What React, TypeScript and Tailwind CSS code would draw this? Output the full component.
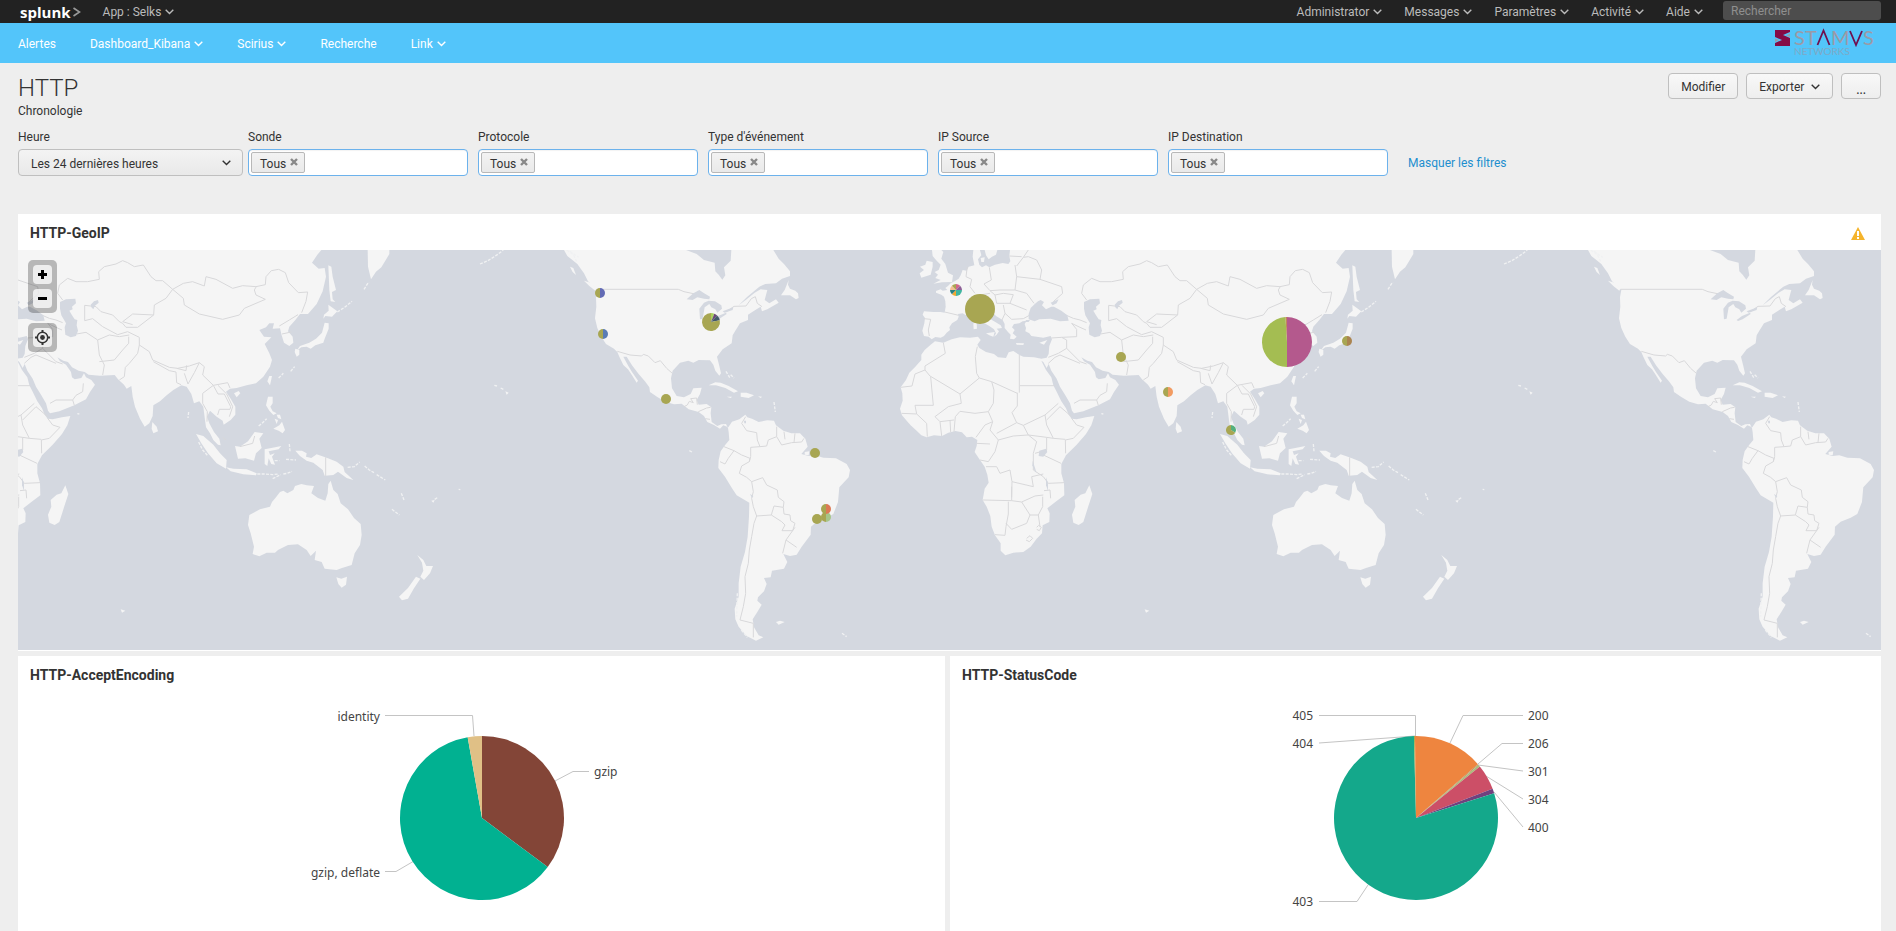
import type { ReactNode } from "react";

const FILTERS = ["Sonde", "Protocole", "Type d'événement", "IP Source", "IP Destination"];

const USER_MENU = ["Administrator", "Messages", "Paramètres", "Activité", "Aide"];

const APP_NAV = [
  { label: "Alertes", menu: false },
  { label: "Dashboard_Kibana", menu: true },
  { label: "Scirius", menu: true },
  { label: "Recherche", menu: false },
  { label: "Link", menu: true },
];

/** Contours of the old world, in thirds of a map pixel. */
const OLD_WORLD = [
  // Europe, Africa and Asia in one ring
  "390,30 388,48 391,64 385,72 368,69 345,74 328,82 318,76 306,82 298,74 294,58 304,46 300,30 280,30 278,50 283,76 266,80 260,92 248,90 242,106 236,116 224,124 212,130 204,138 196,144 202,150 188,152 182,148 168,153 168,158 184,164 192,170 196,184 197,200 194,218 182,216 160,216 132,214 128,224 135,234 133,250 127,272 132,288 146,290 155,298 166,291 182,293 192,288 200,278 210,270 208,262 216,250 232,240 236,230 234,222 248,220 258,226 270,220 278,216 290,226 300,240 314,250 328,258 342,268 348,280 342,290 350,284 357,274 350,266 366,264 362,256 346,246 332,238 324,220 318,206 324,200 334,212 348,228 368,240 374,252 374,264 384,276 392,284 390,296 402,298 410,290 398,280 404,270 396,262 402,252 418,250 428,244 440,242 434,252 438,264 436,274 448,280 454,288 470,290 490,293 512,288 516,298 508,318 506,342 500,353 484,356 462,352 430,350 418,345 400,333 386,337 378,354 354,352 342,342 318,336 298,324 292,314 302,300 294,290 270,293 240,292 215,298 190,308 165,304 152,314 134,330 124,344 124,360 106,380 88,398 78,420 62,442 67,460 68,482 60,506 66,526 80,542 92,556 110,572 124,586 140,592 162,586 186,588 205,578 226,573 246,577 260,592 276,590 292,600 290,618 284,636 300,660 314,680 322,704 326,728 314,746 308,780 320,800 331,828 335,860 345,886 362,910 362,932 376,946 400,938 430,936 452,920 470,896 486,880 488,856 508,846 509,820 502,805 526,786 553,766 552,730 544,700 544,672 558,646 590,614 618,582 634,556 643,528 618,532 590,538 575,536 566,524 558,505 544,484 530,455 520,436 514,412 498,390 484,362 490,366 500,384 506,372 514,392 530,416 540,440 556,466 570,490 576,512 582,520 610,514 655,496 690,478 702,456 717,434 706,420 690,412 684,400 676,414 656,418 648,412 645,396 630,374 612,364 604,352 622,362 636,366 648,382 668,392 686,396 698,404 732,407 776,405 786,418 804,434 812,446 826,438 830,470 837,500 852,536 866,560 880,550 890,528 892,496 912,484 932,466 952,450 976,436 992,440 1006,462 1014,490 1030,484 1042,500 1047,540 1050,562 1062,580 1072,600 1086,614 1094,616 1090,596 1074,576 1060,550 1053,530 1062,512 1082,530 1100,542 1103,554 1124,540 1138,524 1138,500 1124,476 1110,455 1122,446 1142,444 1172,436 1200,430 1222,410 1242,380 1248,360 1240,340 1226,312 1246,292 1224,290 1210,270 1230,262 1240,250 1254,250 1250,266 1272,265 1277,286 1284,308 1300,318 1312,308 1310,290 1296,274 1300,260 1318,240 1332,222 1356,222 1382,192 1400,154 1410,110 1406,84 1388,86 1368,68 1384,44 1396,30",
  // British Isles, Baltic islands
  "156,30 158,48 170,62 182,74 176,90 164,96 174,104 166,114 182,120 160,131 186,127 216,126 219,106 204,98 196,72 184,56 190,36 184,30",
  "140,62 158,66 158,80 152,104 124,113 119,100 132,90 120,80 136,74",
  "314,30 318,46 326,58 336,50 348,44 352,30",
  "302,54 314,52 312,66 304,66",
  // Mediterranean islands
  "280,250 290,248 291,266 281,268",
  "318,280 344,276 340,290 328,286",
  "408,309 432,310 430,315 410,314",
  "478,308 502,300 492,314",
  // Kamchatka, Sakhalin
  "1535,30 1536,80 1545,118 1560,95 1576,82 1588,62 1600,42 1600,30",
  "1417,76 1426,80 1430,110 1440,150 1428,156 1430,178 1438,186 1424,184 1420,150",
  // Japan, Taiwan
  "1417,194 1444,214 1428,230 1408,228 1402,236 1404,224 1418,212",
  "1406,248 1418,250 1418,266 1406,296 1402,308 1378,316 1364,326 1352,320 1336,322 1322,332 1332,318 1360,308 1380,296 1398,278",
  "1318,326 1330,330 1330,344 1322,350 1316,336",
  "1240,408 1248,408 1242,436 1234,424",
  // Sri Lanka, Madagascar, Hainan
  "889,546 902,560 906,574 892,580 887,566",
  "628,736 637,762 624,802 610,846 596,855 580,848 576,824 586,800 584,780 602,764 616,760",
  "1134,460 1148,453 1153,460 1142,472",
  // Philippines
  "1236,470 1250,470 1250,490 1243,500 1250,514 1262,520 1252,525 1240,512 1230,496",
  "1252,566 1270,556 1278,545 1287,570 1280,580 1268,572",
  "1262,524 1272,524 1276,538 1266,534",
  "1256,536 1266,540 1262,552",
  // Indonesia, New Guinea
  "1020,582 1042,588 1072,614 1092,640 1112,660 1110,686 1082,670 1056,640 1036,610",
  "1110,682 1132,686 1172,688 1202,700 1200,706 1162,703 1124,694",
  "1137,618 1152,620 1176,604 1196,576 1222,580 1210,596 1217,624 1200,640 1194,662 1168,655 1146,656",
  "1226,628 1246,624 1276,618 1268,628 1238,634 1242,645 1256,640 1248,650 1257,674 1246,672 1238,655 1234,678 1226,672 1226,650",
  "1318,632 1338,632 1352,640 1350,650 1366,654 1382,643 1416,655 1442,665 1462,680 1466,696 1492,720 1472,714 1446,695 1432,705 1406,707 1400,690 1372,668 1352,662 1332,648",
  // Australia, Tasmania
  "1180,825 1212,808 1242,800 1248,786 1260,772 1272,756 1282,752 1294,760 1312,750 1317,738 1336,732 1352,736 1374,738 1366,760 1386,774 1408,782 1415,760 1417,732 1424,722 1432,750 1445,762 1454,790 1476,808 1494,834 1514,852 1517,885 1512,915 1496,940 1487,975 1458,984 1442,990 1406,986 1397,966 1376,960 1380,932 1364,948 1352,930 1326,913 1296,915 1266,930 1257,938 1232,938 1210,949 1190,942 1194,920 1184,880 1176,855",
  "1441,1012 1456,1016 1473,1010 1470,1034 1457,1043 1447,1032",
  // New Zealand
  "1684,945 1702,960 1711,978 1731,978 1722,1000 1704,1020 1693,1010 1702,992 1698,968",
  "1680,1010 1693,1016 1674,1045 1656,1076 1638,1081 1629,1070 1656,1044",
  "794,1108 808,1112 798,1118",
  "1726,782 1736,780 1732,788",
];

/** Thin island chains that are drawn as strokes. */
const OLD_ISLANDS =
  "M1208,558l10,-8 14,-14M1204,702l24,0 22,2 18,-2M1250,716l24,-12M1282,702l12,-2 14,-6M1300,612l2,22M1290,658l30,2M1256,662l14,0M1475,682l20,-2 16,-14M1526,678l14,12 14,8M1562,704l26,16M1608,808l22,17M1636,760l8,20M1444,216l22,-14 22,-18M1524,148l14,-22M1268,414l14,-14M1304,394l12,-14M1028,606l12,24 14,16M998,516l-2,18M664,521l6,1M1736,778l8,-5M1808,748l5,1";

const OLD_BORDERS =
  "M620,180L605,160 610,135 635,115 660,125 695,125 730,118 728,95 745,80 780,72 800,62 815,68 835,80 862,75 885,110 900,122 920,122 950,148 982,130 1010,125 1045,138 1050,110 1080,118 1130,145 1160,137 1200,140 1228,134 1230,110 1246,92 1268,88 1288,98 1298,128 1327,158 1355,156 1350,184 1337,218" +
  "M950,148L982,175 985,195 1030,222 1100,238 1150,225 1165,205 1228,178 1200,165 1195,150 1202,138M950,148L930,175 895,195 893,225 845,262 810,262 800,250 790,245 770,225 735,215 720,200 686,196 686,242M686,242L710,236 740,260 785,284 815,275M893,225L830,222 800,245 830,254M662,282L690,277 725,300 760,285 790,290 820,285M725,300L730,345 745,375 740,405M730,365L775,360 800,330 818,310 818,290M815,275L850,292 850,315 880,335 890,360 940,382 965,385 1000,378 1030,368 1045,380 1040,405 1072,436 1115,428 1122,444" +
  "M850,315L845,340 820,370 808,382 805,410 790,420M892,365L940,392 960,396M962,385L990,392 992,376M960,396L962,428 975,434M985,400L996,432 1015,398 1030,368M1072,436L1040,460 1040,490 1054,515 1053,545M1072,436L1086,462 1105,462 1124,500 1122,508 1090,508 1085,525M1086,436L1112,462 1130,500 1120,530M1110,600L1100,592M1152,620L1190,610 1196,588M1270,258L1300,240 1326,224M1278,282L1306,276M1409,652V708" +
  "M575,250L590,268 590,290 545,292 514,294M545,292L560,300 560,325 600,365 620,372M560,325L535,340 505,352M505,370L525,352 540,345M540,345L600,370M582,490L600,480 650,480 660,466 680,455 682,430M650,480L655,496M550,222L580,235 600,240 620,248M575,250L600,262 618,270" +
  "M262,80L258,110 275,118 270,140 285,160M328,82L334,120 312,132 330,152 360,150 405,150 410,110 405,75M410,110L480,118 485,90 470,60 445,50 430,52 410,78M388,48L425,50M430,52L445,30M330,152L345,165 370,160 400,164 390,190 440,210M345,165L350,190 375,190 390,190M405,150L440,160 462,190M370,195L375,220 395,238 430,236 450,225M375,220L366,240M300,165L330,160M480,118L545,140 548,160 520,185M132,236L152,238 145,270 148,288M194,216L236,226" +
  "M418,345V458M420,437H523M292,320L286,350 290,400 298,414 335,425 412,460M298,414L240,462 150,408 135,390M190,308L196,340 135,378 135,390 105,402 96,438 62,442M152,410L160,496 105,496M335,425L342,450 340,490 325,515 285,520 240,514 226,530 222,575M240,462L244,490 205,500 165,530M165,530L180,545 222,540M180,545L185,588M210,540L212,576M105,496L110,522 65,520M110,522L140,550 142,590M325,515L338,545 315,555 288,592M338,545L330,570 355,600 345,635 325,665 300,660M290,610L330,612M412,458V498L396,518 410,548 430,556 495,525M410,548L350,580M430,556L445,585 500,592 520,595 556,598M495,525L500,555 520,595M495,525L535,490M500,540L540,500 575,530M575,535L590,555 612,562M612,562L580,595 556,600 557,640M355,600L400,588 445,585 470,605 460,640 460,690 490,710M500,592L500,630 490,645 543,670M318,680L350,680 360,700 390,690 396,725 395,772M396,725L460,740 455,710 490,702M490,710L505,730 552,728M395,740L395,782 308,780M395,782L425,786 465,768 490,765M425,786L450,825 475,825 488,800 488,770M385,785V822L378,860 375,886 345,884M378,850L395,868 440,850 450,825M475,825L480,860M440,895l10,-8 8,8 -10,10 -10,-5M470,862l6,-6 8,6 -6,10 -8,-4M465,640L500,630M492,752L510,750 512,775";

const OLD_WATERS = [
  // Black Sea and Azov
  "446,238 446,222 452,204 462,194 474,184 482,180 492,186 486,196 498,208 514,200 522,200 544,212 562,226 566,242 540,244 512,236 478,238 464,244",
  "512,188 536,178 530,190 518,196",
  // Caspian
  "612,186 630,178 658,176 660,190 648,200 650,208 640,212 648,226 656,238 664,240 662,256 666,272 660,288 644,292 628,284 626,262 630,250 616,226 612,206",
  "704,194 714,184 726,180 728,188 716,198 712,208 706,202",
  // Lake Victoria, Tanganyika, Malawi, Marmara
  "478,632 498,626 502,636 490,650 476,648",
  "458,662 464,680 470,700 464,692 457,676",
  "498,712 504,730 504,752 498,736",
  "438,240 450,240 446,246 436,246",
];

const AMERICAS = [
  "252,30 262,48 280,62 292,72 312,100 324,124 338,136 352,150 348,172 349,200 345,235 352,264 364,290 378,312 402,326 412,336 418,350 430,375 444,388 455,404 470,428 474,422 456,396 445,378 430,350 440,350 456,376 476,402 496,425 508,442 510,456 532,471 556,485 582,493 605,491 626,508 656,516 672,528 682,546 702,555 720,566 730,556 745,562 756,545 778,538 796,524 802,532 816,536 836,546 862,541 882,542 888,556 910,572 934,580 960,580 976,596 983,620 964,642 986,648 1006,646 1030,653 1068,655 1100,672 1110,690 1106,712 1078,742 1074,786 1060,822 1040,833 1010,845 993,860 992,884 965,920 950,944 930,948 910,942 922,966 912,986 876,992 872,1012 852,1014 860,1032 852,1054 834,1072 832,1082 845,1094 832,1116 818,1138 822,1162 836,1186 850,1192 828,1202 800,1188 776,1160 766,1138 764,1106 776,1070 776,1030 782,980 795,936 803,890 807,830 808,788 770,766 756,745 735,710 715,684 716,660 722,634 736,614 748,600 746,576 744,564 738,552 724,553 712,558 695,546 692,520 694,502 680,492 656,494 650,480 660,462 665,443 640,445 632,462 612,472 590,468 576,445 573,415 578,392 600,368 625,362 640,368 656,360 690,361 700,374 706,392 718,407 723,400 718,378 711,350 728,328 755,310 758,286 766,272 780,250 804,240 804,224 826,210 842,200 846,214 862,208 896,188 888,178 868,190 854,180 862,150 842,148 824,158 800,178 776,196 802,170 838,140 856,132 888,130 906,116 930,108 930,94 912,72 896,56 880,30",
  "926,120 914,150 903,166 930,166 948,178 956,174 954,160 946,152 930,146 924,134",
  "312,122 332,128 350,144 346,152 328,138",
  "270,80 280,84 288,105 278,96",
  "686,436 706,427 722,428 746,438 774,454 762,458 736,444 708,436",
  "782,458 800,458 822,466 806,474 782,470",
  "740,470 756,470 752,474",
  "834,469 846,470 842,474",
  "888,1146 900,1142 914,1146 896,1154",
  "974,636 988,634 986,646 974,644",
  "76,454 86,458 80,464",
];

const AMERICAN_WATERS = [
  "618,30 650,42 672,60 704,68 706,94 716,104 727,119 736,106 732,82 742,72 752,62 754,30",
  "620,178 640,160 658,150 670,158 690,170 688,178 672,176 652,172 638,180",
  "658,206 672,188 686,182 705,184 724,196 726,206 712,218 706,208 694,202 688,192 674,202 668,236 660,238",
  "698,240 714,228 738,218 740,222 716,238 702,243",
  "728,214 760,202 758,210 734,218",
  "792,542 798,542 798,550 793,550",
  "810,762 820,768 816,774",
];

const AMERICAN_BORDERS =
  "M350,148H595L612,155 645,162M738,216L762,199 798,198 814,176 826,170 832,190 846,200M412,334L450,345 485,348 490,343 505,348 525,368 541,362 560,385 577,400M622,495L628,484 640,488 632,476 650,474 652,494M655,515L680,504 692,502M676,536L690,538M612,500L622,495" +
  "M797,530L785,550 800,572 830,578 832,600 840,620 812,622 812,650 808,665M732,620L762,632 745,655 735,672 720,665M762,632L785,645 810,655 808,665 785,678 778,700 800,712 815,725 848,713 860,735 892,750 895,772 912,785 910,802 882,798 874,825 830,828M815,725L820,755 815,775 820,800 830,828 822,850 815,890 808,930 805,970 795,1010 797,1060 790,1100 780,1140 820,1150V1192M874,825L905,845 915,855 906,872 938,872 945,850 932,842 930,825 912,822 910,802M945,862L918,900 950,922M918,900L908,940M890,560L890,590 905,615 935,608 965,606 972,595M912,575L915,598M945,580L942,608M840,620L860,618 865,600 890,590";

const AMERICAN_ISLANDS =
  "M0,72l24,-10 28,-18 18,-14M260,30l20,14 10,20M270,34l26,18M738,394l6,10 6,10M752,404l10,10M882,486l4,30M43,436l8,2M62,444l8,4M772,1060l-2,70M784,1170l18,22M1086,1180l14,10M628,632l8,4";

const OLIVE = "#a8a652";

type Slice = [share: number, color: string];

const PINS: { x: number; y: number; r: number; slices: Slice[] }[] = [
  { x: 600, y: 293, r: 5, slices: [[50, "#636bb5"], [50, OLIVE]] },
  { x: 603, y: 334, r: 5, slices: [[50, "#5a7cb5"], [50, OLIVE]] },
  { x: 711, y: 322, r: 9, slices: [[6, "#a9d15c"], [6, "#6b4a78"], [10, "#42596b"], [78, OLIVE]] },
  { x: 666, y: 399, r: 5, slices: [[100, OLIVE]] },
  { x: 815, y: 453, r: 5, slices: [[100, OLIVE]] },
  { x: 826, y: 517, r: 5, slices: [[50, "#a7c588"], [50, OLIVE]] },
  { x: 826, y: 509, r: 5, slices: [[50, "#dd7a55"], [50, OLIVE]] },
  { x: 817, y: 519, r: 5, slices: [[100, OLIVE]] },
  { x: 956, y: 290, r: 6, slices: [[12, "#d4668a"], [13, "#8d6097"], [25, "#41b5a0"], [12, "#f0a733"], [13, "#2b7f80"], [13, "#f5be92"], [12, OLIVE]] },
  { x: 980, y: 309, r: 15, slices: [[100, OLIVE]] },
  { x: 1121, y: 357, r: 5, slices: [[100, OLIVE]] },
  { x: 1168, y: 392, r: 5, slices: [[50, "#f29b62"], [50, OLIVE]] },
  { x: 1231, y: 430, r: 5, slices: [[34, "#55b07d"], [66, OLIVE]] },
  { x: 1287, y: 342, r: 25, slices: [[50, "#b4598d"], [49, "#a4bd52"], [1, "#c08a5a"]] },
  { x: 1347, y: 341, r: 5, slices: [[50, "#ab8450"], [50, OLIVE]] },
];

function Pie({ cx, cy, r, slices }: { cx: number; cy: number; r: number; slices: Slice[] }) {
  if (slices.length === 1) return <circle cx={cx} cy={cy} r={r} fill={slices[0][1]} />;
  const total = slices.reduce((sum, [share]) => sum + share, 0);
  const point = (share: number) => {
    const angle = (share / total) * 2 * Math.PI;
    return `${(cx + r * Math.sin(angle)).toFixed(2)},${(cy - r * Math.cos(angle)).toFixed(2)}`;
  };
  let start = 0;
  return (
    <>
      {slices.map(([share, color], i) => {
        const from = start;
        start += share;
        const large = share / total > 0.5 ? 1 : 0;
        return (
          <path
            key={i}
            d={`M${cx},${cy}L${point(from)}A${r},${r} 0 ${large} 1 ${point(start)}Z`}
            fill={color}
          />
        );
      })}
    </>
  );
}

function Caret({ className = "" }: { className?: string }) {
  return (
    <svg viewBox="0 0 9 6" className={`h-1.5 w-[9px] shrink-0 ${className}`} aria-hidden="true">
      <path d="M0.7 0.8 4.5 4.6 8.3 0.8" fill="none" stroke="currentColor" strokeWidth="1.4" />
    </svg>
  );
}

/** One copy of a group of continents; the map repeats them to the edges. */
function Lands({
  x,
  lands,
  waters,
  borders,
  islands,
}: {
  x: number;
  lands: string[];
  waters: string[];
  borders: string;
  islands: string;
}) {
  return (
    <g transform={`translate(${x} 0)`} strokeLinejoin="round">
      {lands.map((points) => (
        <polygon key={points} points={points} fill="#f5f5f5" />
      ))}
      <path d={borders} fill="none" stroke="#d8d8da" strokeWidth="3" />
      {waters.map((points) => (
        <polygon key={points} points={points} fill="#d4d8e0" />
      ))}
      <path d={islands} fill="none" stroke="#f0f1f2" strokeWidth="4" strokeDasharray="9 4" />
    </g>
  );
}

function WorldMap() {
  const oldWorld = { lands: OLD_WORLD, waters: OLD_WATERS, borders: OLD_BORDERS, islands: OLD_ISLANDS };
  const americas = {
    lands: AMERICAS,
    waters: AMERICAN_WATERS,
    borders: AMERICAN_BORDERS,
    islands: AMERICAN_ISLANDS,
  };
  return (
    <svg
      viewBox="18 250 1863 400"
      preserveAspectRatio="xMidYMid slice"
      className="block h-[400px] w-full bg-[#d4d8e0]"
      role="img"
      aria-label="HTTP-GeoIP"
    >
      <g transform="translate(0 240) scale(0.33333)">
        <Lands x={-432} {...oldWorld} />
        <Lands x={2640} {...oldWorld} />
        <Lands x={1440} {...americas} />
        <Lands x={4512} {...americas} />
      </g>
      {PINS.map((pin) => (
        <Pie key={`${pin.x}-${pin.y}`} cx={pin.x} cy={pin.y} r={pin.r} slices={pin.slices} />
      ))}
    </svg>
  );
}

function MapButton({ label, children }: { label: string; children: ReactNode }) {
  return (
    <button
      aria-label={label}
      className="flex size-[19px] items-center justify-center rounded-sm bg-white/75 text-black"
    >
      {children}
    </button>
  );
}

function MapControls() {
  return (
    <div className="absolute top-2.5 left-2.5 flex flex-col gap-2.5">
      <div className="flex flex-col gap-[5px] rounded-[5px] bg-black/25 p-[5px]">
        <MapButton label="Zoom avant">
          <svg viewBox="0 0 9 9" className="size-[9px]">
            <path d="M4.5 0V9M0 4.5H9" stroke="currentColor" strokeWidth="3" />
          </svg>
        </MapButton>
        <MapButton label="Zoom arrière">
          <svg viewBox="0 0 9 9" className="size-[9px]">
            <path d="M0 4.5H9" stroke="currentColor" strokeWidth="3" />
          </svg>
        </MapButton>
      </div>
      <div className="rounded-[5px] bg-black/25 p-[5px]">
        <MapButton label="Recentrer">
          <svg viewBox="0 0 15 15" className="size-[15px]" fill="none" stroke="#333">
            <circle cx="7.5" cy="7.5" r="5.2" strokeWidth="1.5" />
            <circle cx="7.5" cy="7.5" r="2.4" fill="#333" stroke="none" />
            <path d="M7.5 0V3M7.5 12V15M0 7.5H3M12 7.5H15" strokeWidth="2" />
          </svg>
        </MapButton>
      </div>
    </div>
  );
}

function StamusLogo() {
  return (
    <svg viewBox="0 -5 102 40" className="h-10 w-[102px]" role="img" aria-label="Stamus Networks">
      <path d="M1 2H16V4L9 7 16 10V18H1V15L8 12 1 9Z" fill="#850b45" />
      <path d="M16 5.5 12 7.5 16 9ZM1 10.5 5 12 1 14Z" fill="#9c9aa6" />
      <g fontFamily="Lato, sans-serif" fontSize="20" fill="#9c9aa6">
        <text x="20" y="17">S</text>
        <text x="31" y="17">T</text>
        <text x="57" y="17">M</text>
        <text x="89" y="17">S</text>
      </g>
      <path d="M43.5 17 49.5 2.5 55.5 17M76 3 82 17 88 3" fill="none" stroke="#6f1050" strokeWidth="1.8" />
      <text x="20" y="27" fontFamily="Lato, sans-serif" fontSize="10" fill="#7fa9c6">
        NETWORKS
      </text>
    </svg>
  );
}

function TopBar() {
  return (
    <header className="flex h-[23px] items-center justify-between bg-[#222] pr-[15px] pl-5 text-[#bbb]">
      <div className="flex items-center gap-[22px]">
        <a href="#accueil" className="flex items-center gap-0.5">
          <span className="font-['Open_Sans'] text-[15px] leading-5 font-bold text-white">splunk</span>
          <svg viewBox="0 0 8 10" className="h-2.5 w-2" aria-hidden="true">
            <path d="M0.5 1 6.5 5 0.5 9" fill="none" stroke="#999" strokeWidth="1.6" />
          </svg>
        </a>
        <button className="flex items-center gap-1">
          App : Selks <Caret />
        </button>
      </div>
      <div className="flex items-center">
        <nav className="flex items-center gap-[22px] pr-5">
          {USER_MENU.map((label) => (
            <button key={label} className="flex items-center gap-1">
              {label} <Caret />
            </button>
          ))}
        </nav>
        <input
          type="search"
          aria-label="Rechercher"
          placeholder="Rechercher"
          className="mb-0.5 h-[19px] w-[158px] rounded-[3px] bg-[#4d4d4d] px-2 text-white placeholder:text-[#8f8f8f]"
        />
      </div>
    </header>
  );
}

function AppBar() {
  return (
    <div className="flex h-10 justify-between bg-[#53c5fa] pr-5 pl-[18px] text-white">
      <nav className="flex items-center gap-[34px] pt-0.5">
        {APP_NAV.map(({ label, menu }) =>
          menu ? (
            <button key={label} className="flex items-center gap-1">
              {label} <Caret />
            </button>
          ) : (
            <a key={label} href={`#${label.toLowerCase()}`}>
              {label}
            </a>
          ),
        )}
      </nav>
      <StamusLogo />
    </div>
  );
}

function ToolButton({ children }: { children: ReactNode }) {
  return (
    <button className="flex h-[26px] items-center gap-[7px] rounded border border-[#bfbfbf] bg-linear-to-b from-[#f8f8f8] to-[#eee] px-3 pt-0.5 text-[#333]">
      {children}
    </button>
  );
}

function TokenField({ label }: { label: string }) {
  const id = `filtre-${label.replace(/\W+/g, "-").toLowerCase()}`;
  return (
    <div className="w-[220px]">
      <label htmlFor={id} className="mb-1 block">
        {label}
      </label>
      <div className="flex h-[27px] items-center rounded border border-[#6cb2ec] bg-white pl-0.5 inset-shadow-xs">
        <button className="flex h-[21px] items-center gap-1 rounded-xs border border-[#b8b8b8] bg-linear-to-b from-[#f3f3f3] to-[#e9e9e9] pt-0.5 pr-1.5 pl-2">
          Tous
          <svg viewBox="0 0 8 8" className="mb-1 size-2" aria-hidden="true">
            <path d="M1 1 7 7M7 1 1 7" stroke="#888" strokeWidth="2.4" />
          </svg>
        </button>
        <input id={id} className="min-w-0 flex-1 px-1 outline-none" />
      </div>
    </div>
  );
}

function Filters() {
  return (
    <form className="flex items-end pt-2.5">
      <div className="mr-[5px] w-[225px]">
        <label htmlFor="heure" className="mb-1 block">
          Heure
        </label>
        <div className="relative">
          <select
            id="heure"
            className="block h-[27px] w-full appearance-none rounded border border-[#bfbfbf] bg-linear-to-b from-[#f3f3f3] to-[#e9e9e9] px-3 pt-0.5 text-[#333]"
          >
            <option>Les 24 dernières heures</option>
          </select>
          <Caret className="pointer-events-none absolute top-[11px] right-3" />
        </div>
      </div>
      <div className="flex gap-2.5">
        {FILTERS.map((label) => (
          <TokenField key={label} label={label} />
        ))}
      </div>
      <a href="#filtres" className="ml-5 pb-[5px] text-[#1e8fce]">
        Masquer les filtres
      </a>
    </form>
  );
}

function PanelTitle({ children }: { children: ReactNode }) {
  return <h2 className="text-sm leading-5 font-bold text-[#333]">{children}</h2>;
}

interface Callout {
  label: string;
  x: number;
  y: number;
  anchor: "start" | "end";
  line: string;
}

function PieChart({ title, slices, callouts }: { title: string; slices: Slice[]; callouts: Callout[] }) {
  return (
    <svg viewBox="0 0 400 250" className="mx-auto mt-1.5 block h-[250px] w-[400px]" role="img" aria-label={title}>
      {callouts.map(({ label, line }) => (
        <path key={label} d={line} fill="none" stroke="#c4c4c4" />
      ))}
      <Pie cx={200} cy={127} r={82} slices={slices} />
      {callouts.map(({ label, x, y, anchor }) => (
        <text key={label} x={x} y={y} textAnchor={anchor} fontFamily="Noto Sans, sans-serif" fontSize="12" fill="#444">
          {label}
        </text>
      ))}
    </svg>
  );
}

const ENCODING_SLICES: Slice[] = [
  [35.2, "#834537"],
  [62, "#01b191"],
  [2.8, "#e0c086"],
];

const ENCODING_CALLOUTS: Callout[] = [
  { label: "identity", x: 98, y: 30, anchor: "end", line: "M103,24.5H190.5L192,45" },
  { label: "gzip", x: 312, y: 85, anchor: "start", line: "M307,80.5H291L273,90" },
  { label: "gzip, deflate", x: 98, y: 186, anchor: "end", line: "M103,180.5H114L132,170" },
];

const STATUS_SLICES: Slice[] = [
  [13.6, "#ee853f"],
  [0.2, "#c08a5a"],
  [0.4, "#a9bd7a"],
  [5, "#cc4f67"],
  [0.9, "#70417e"],
  [79.5, "#14a88b"],
  [0.2, "#a9a94a"],
  [0.2, "#ee853f"],
];

const STATUS_CALLOUTS: Callout[] = [
  { label: "405", x: 97, y: 29, anchor: "end", line: "M103,24.5H199.5V45" },
  { label: "404", x: 97, y: 57, anchor: "end", line: "M103,52 199,45" },
  { label: "403", x: 97, y: 215, anchor: "end", line: "M103,210.5H141L152,194" },
  { label: "200", x: 312, y: 29, anchor: "start", line: "M307,24.5H247L234,52" },
  { label: "206", x: 312, y: 57, anchor: "start", line: "M307,52.5H286L262,73" },
  { label: "301", x: 312, y: 85, anchor: "start", line: "M307,80 262,74" },
  { label: "304", x: 312, y: 113, anchor: "start", line: "M307,108 270,85" },
  { label: "400", x: 312, y: 141, anchor: "start", line: "M307,136 278,101" },
];

export default function App() {
  return (
    <div className="min-h-screen bg-[#eee] font-[Roboto,sans-serif] text-xs leading-4 text-[#333]">
      <TopBar />
      <AppBar />
      <main className="pr-[15px] pl-[18px]">
        <div className="flex items-start justify-between pt-2.5">
          <div>
            <h1 className="text-2xl leading-[30px] font-light">HTTP</h1>
            <p>Chronologie</p>
          </div>
          <div className="flex gap-2">
            <ToolButton>Modifier</ToolButton>
            <ToolButton>
              Exporter <Caret />
            </ToolButton>
            <ToolButton>
              <span className="px-0.5 pt-1.5 font-['Noto_Sans']">...</span>
            </ToolButton>
          </div>
        </div>
        <Filters />

        <section className="mt-[38px] bg-white pb-px">
          <div className="flex h-9 items-center justify-between px-3 pt-0.5">
            <PanelTitle>HTTP-GeoIP</PanelTitle>
            <svg viewBox="0 0 14 13" className="mr-1 h-[13px] w-3.5" role="img" aria-label="Avertissement">
              <path d="M7 0 14 13H0Z" fill="#f5b42c" />
              <path d="M6 4H8V9H6ZM6 10H8V12H6Z" fill="#fff" />
            </svg>
          </div>
          <div className="relative">
            <WorldMap />
            <MapControls />
          </div>
        </section>

        <div className="mt-[5px] grid grid-cols-[927fr_931fr] gap-[5px]">
          <section className="bg-white px-3 pt-[9px]">
            <PanelTitle>HTTP-AcceptEncoding</PanelTitle>
            <PieChart title="HTTP-AcceptEncoding" slices={ENCODING_SLICES} callouts={ENCODING_CALLOUTS} />
          </section>
          <section className="bg-white px-3 pt-[9px]">
            <PanelTitle>HTTP-StatusCode</PanelTitle>
            <PieChart title="HTTP-StatusCode" slices={STATUS_SLICES} callouts={STATUS_CALLOUTS} />
          </section>
        </div>
      </main>
    </div>
  );
}
